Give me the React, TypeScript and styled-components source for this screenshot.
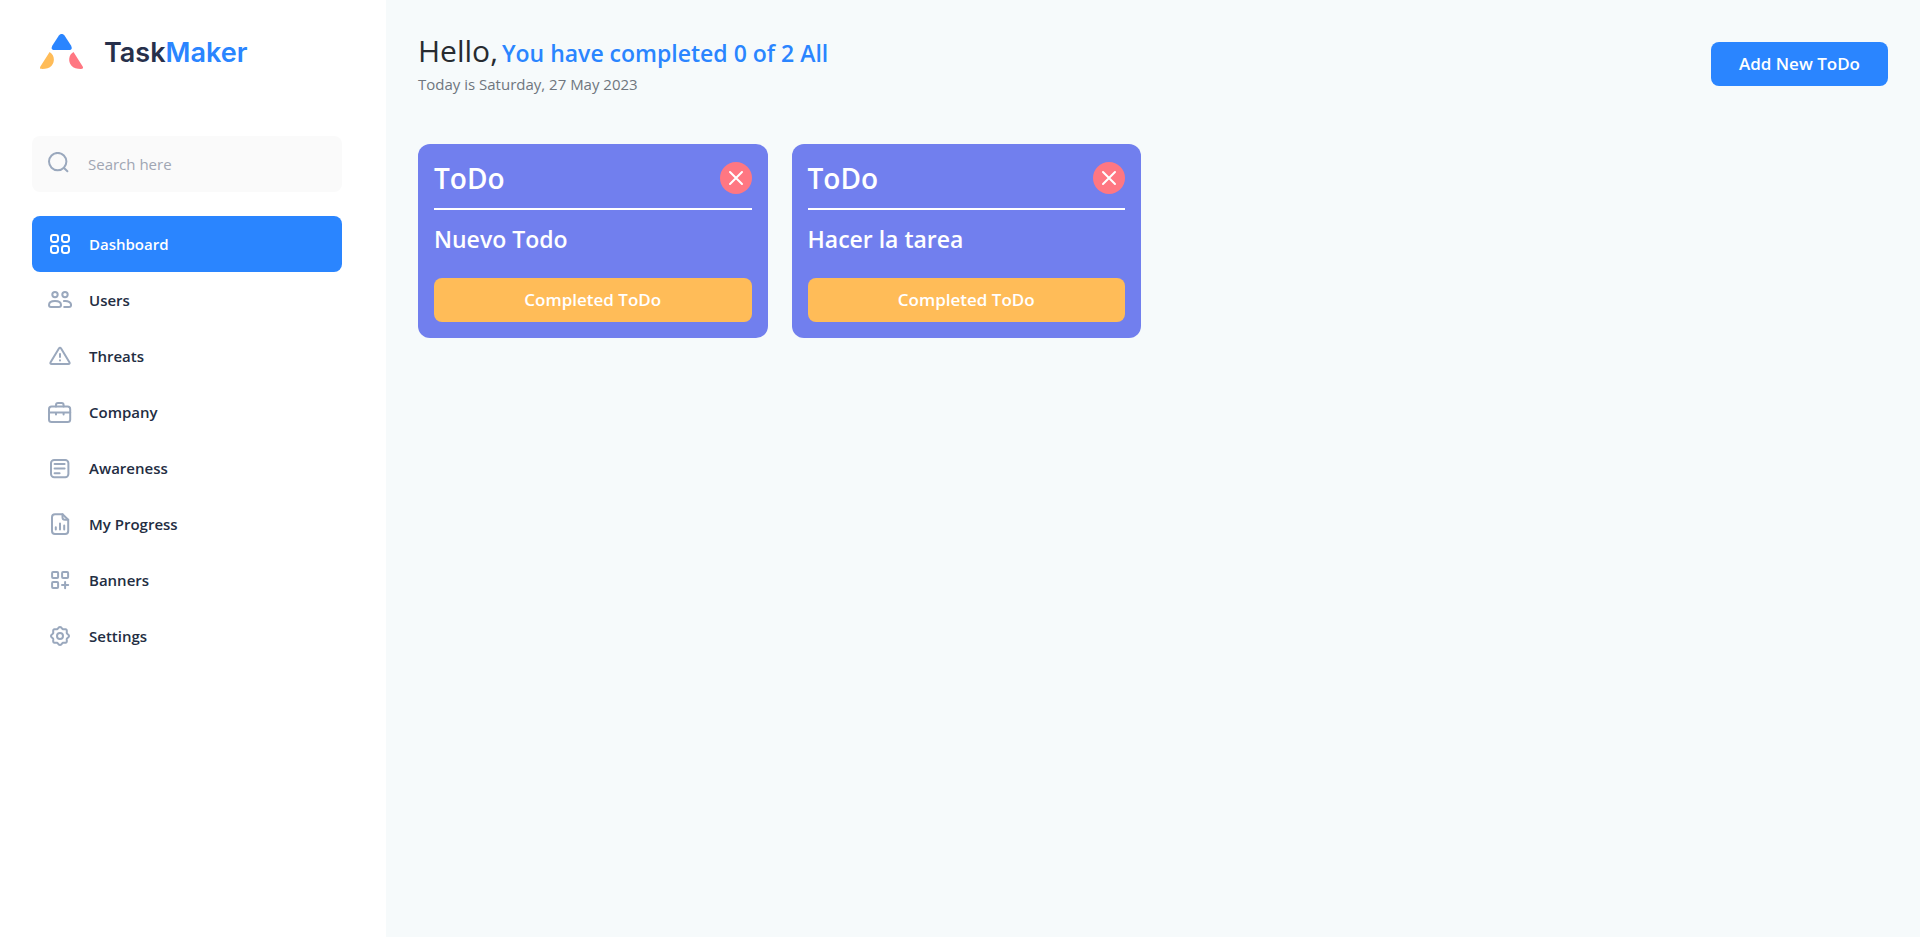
import React from "react";
import styled, { createGlobalStyle } from "styled-components";

const GlobalStyle = createGlobalStyle`
  *, *::before, *::after { box-sizing: border-box; }
  body {
    margin: 0;
    background: #f6fafb;
    color: #27303f;
    font-family: "Open Sans", "Noto Sans", sans-serif;
    font-size: 15px;
    line-height: 24px;
  }
  h1, h2, p, ul { margin: 0; padding: 0; }
  button, input { font: inherit; }
`;

const Page = styled.div`
  display: flex;
  min-height: 100vh;
`;

const Sidebar = styled.aside`
  flex: 0 0 386px;
  padding: 32px 44px 32px 32px;
  background: #ffffff;
`;

const Brand = styled.a`
  display: flex;
  align-items: center;
  gap: 20px;
  height: 40px;
  margin-bottom: 64px;
  padding-left: 8px;
  color: #27304b;
  font-family: Inter, sans-serif;
  font-size: 27px;
  font-weight: 600;
  line-height: 40px;
  text-decoration: none;
`;

const BrandName = styled.span`
  padding-top: 2px;
`;

const BrandAccent = styled.span`
  color: #2a85ff;
`;

const SearchField = styled.label`
  display: flex;
  align-items: center;
  gap: 16px;
  height: 56px;
  margin-bottom: 24px;
  padding: 0 16px;
  border-radius: 8px;
  background: #fafafa;
  color: #9aa8bd;
`;

const SearchInput = styled.input`
  flex: 1;
  min-width: 0;
  padding: 0;
  border: 0;
  outline: 0;
  background: transparent;
  color: #27303f;
  &::placeholder { color: #a0a6b3; opacity: 1; }
`;

const NavList = styled.ul`
  list-style: none;
`;

const NavLink = styled.a<{ $active?: boolean }>`
  display: flex;
  align-items: center;
  gap: 17px;
  height: 56px;
  padding: 0 16px;
  border-radius: 8px;
  background: ${(p) => (p.$active ? "#2a85ff" : "transparent")};
  color: ${(p) => (p.$active ? "#ffffff" : "#232d42")};
  font-weight: 600;
  text-decoration: none;
  svg { color: ${(p) => (p.$active ? "#ffffff" : "#9aa8bd")}; }
`;

const Main = styled.main`
  flex: 1;
  min-width: 0;
  padding: 32px;
`;

const Header = styled.header`
  display: flex;
  align-items: center;
  justify-content: space-between;
  height: 64px;
  margin-bottom: 48px;
`;

const Greeting = styled.h1`
  color: #272b30;
  font-size: 30px;
  font-weight: 400;
  line-height: 38px;
`;

const Summary = styled.span`
  margin-left: 4px;
  color: #2a85ff;
  font-size: 23px;
  font-weight: 600;
`;

const Today = styled.p`
  color: #6f767e;
`;

const Button = styled.button<{ $tone: "primary" | "warning" }>`
  height: 44px;
  padding: 0 28px;
  border: 0;
  border-radius: 8px;
  background: ${(p) => (p.$tone === "primary" ? "#2a85ff" : "#ffbc58")};
  color: #ffffff;
  font-size: 17px;
  font-weight: 600;
  cursor: pointer;
`;

const Board = styled.section`
  display: grid;
  grid-template-columns: repeat(4, minmax(0, 1fr));
  gap: 24px;
`;

const Card = styled.article`
  display: flex;
  flex-direction: column;
  padding: 16px;
  border-radius: 12px;
  background: #717fee;
  color: #ffffff;
`;

const CardHead = styled.div`
  display: flex;
  align-items: center;
  justify-content: space-between;
  padding-bottom: 12px;
  border-bottom: 2px solid #ffffff;
`;

const CardTitle = styled.h2`
  font-size: 28px;
  font-weight: 600;
  line-height: 36px;
`;

const CardText = styled.p`
  margin: 11px 0 21px;
  font-size: 23px;
  font-weight: 600;
  line-height: 36px;
`;

const CloseButton = styled.button`
  display: grid;
  place-items: center;
  width: 32px;
  height: 32px;
  padding: 0;
  border: 0;
  border-radius: 50%;
  background: #ff7782;
  color: #ffffff;
  cursor: pointer;
`;

const Icon = ({ children }: { children: React.ReactNode }) => (
  <svg
    width="24"
    height="24"
    viewBox="0 0 24 24"
    fill="none"
    stroke="currentColor"
    strokeWidth="2"
    strokeLinecap="round"
    strokeLinejoin="round"
    aria-hidden="true"
  >
    {children}
  </svg>
);

const gearPath =
  Array.from({ length: 96 }, (_, i) => {
    const t = (i / 96) * Math.PI * 2;
    const r = 8.2 + 0.8 * Math.cos(8 * t);
    return `${i ? "L" : "M"}${(12 + r * Math.cos(t)).toFixed(2)} ${(12 + r * Math.sin(t)).toFixed(2)}`;
  }).join("") + "Z";

const Logo = () => (
  <svg width="44" height="36" viewBox="0 0 44 36" aria-hidden="true">
    <path fill="#2a85ff" d="M18.900 1.500Q21.700-1.700 24.500 1.500L31 11.400Q33.300 16 28.800 16H14.600Q10.100 16 12.400 11.400Z" />
    <path fill="#ffbc58" d="M9.600 17.900C14.400 20.400 15.200 27.400 11.800 31.400C9.600 34 6 34.900 2.300 34.900C0 34.900-.4 34 .4 32.500Z" />
    <path fill="#ff7782" d="M33.500 17.900C28.700 20.400 27.900 27.400 31.300 31.400C33.500 34 37.100 34.900 40.800 34.900C43.100 34.900 43.500 34 42.700 32.500Z" />
  </svg>
);

const navItems = [
  {
    label: "Dashboard",
    icon: (
      <>
        <rect x="3" y="3" width="7" height="7" rx="2.4" />
        <rect x="14" y="3" width="7" height="7" rx="2.4" />
        <rect x="3" y="14" width="7" height="7" rx="2.4" />
        <rect x="14" y="14" width="7" height="7" rx="2.4" />
      </>
    ),
  },
  {
    label: "Users",
    icon: (
      <>
        <circle cx="7" cy="6.600" r="2.700" />
        <circle cx="17" cy="6.600" r="2.700" />
        <path d="M7 13c3.600 0 6 1.600 6 4 0 1.400-.8 2-2 2H3c-1.200 0-2-.6-2-2 0-2.400 2.400-4 6-4z" />
        <path d="M16 13.100c4-.5 7.100 1.300 7.100 3.900 0 1.400-.8 2-2 2H16.200" />
      </>
    ),
  },
  {
    label: "Threats",
    icon: (
      <>
        <path d="M10.900 4.500Q12 2.800 13.100 4.500L21.400 18.200Q22.300 20 20.300 20H3.700Q1.700 20 2.600 18.200Z" />
        <path d="M12 10v3M12 16.300v.2" />
      </>
    ),
  },
  {
    label: "Company",
    icon: (
      <>
        <rect x="1" y="6.600" width="21.200" height="15.500" rx="2.600" />
        <path d="M8 6.400V5Q8 3 10 3h3.600q2 0 2 2v1.400M1 12.500h21.200M8 12.500v2M15.600 12.500v2" />
      </>
    ),
  },
  {
    label: "Awareness",
    icon: (
      <>
        <rect x="3" y="3.900" width="17.400" height="17.400" rx="3.200" />
        <path d="M6.600 7.900h10M6.600 12.600h10M6.600 17.300h5" />
      </>
    ),
  },
  {
    label: "My Progress",
    icon: (
      <>
        <path d="M14.500 2.300H7Q4 2.300 4 5.300v13.800q0 3 3 3h10.200q3 0 3-3V7.800z" />
        <path d="M14.500 2.300v3q0 2.500 2.500 2.500h3.200M7.800 15.200v2.200M12 11.500v5.900M16.200 13.500v3.900" />
      </>
    ),
  },
  {
    label: "Banners",
    icon: (
      <>
        <rect x="4.100" y="3.900" width="6" height="6" rx="1" />
        <rect x="14.100" y="3.900" width="6" height="6" rx="1" />
        <rect x="4.100" y="13.900" width="6" height="6" rx="1" />
        <path d="M17.100 14v6.200M14 17.100h6.200" />
      </>
    ),
  },
  {
    label: "Settings",
    icon: (
      <>
        <path d={gearPath} />
        <circle cx="12" cy="12" r="3" />
      </>
    ),
  },
];

const todos = ["Nuevo Todo", "Hacer la tarea"];

const App = () => (
  <>
    <GlobalStyle />
    <Page>
      <Sidebar>
        <Brand href="#">
          <Logo />
          <BrandName>
            Task<BrandAccent>Maker</BrandAccent>
          </BrandName>
        </Brand>
        <SearchField>
          <Icon>
            <circle cx="9.700" cy="9.600" r="8.700" />
            <path d="M16 16l3.400 3.200" />
          </Icon>
          <SearchInput type="text" placeholder="Search here" aria-label="Search here" />
        </SearchField>
        <nav>
          <NavList>
            {navItems.map((item, index) => (
              <li key={item.label}>
                <NavLink href="#" $active={index === 0}>
                  <Icon>{item.icon}</Icon>
                  {item.label}
                </NavLink>
              </li>
            ))}
          </NavList>
        </nav>
      </Sidebar>
      <Main>
        <Header>
          <div>
            <Greeting>
              Hello,<Summary>You have completed 0 of 2 All</Summary>
            </Greeting>
            <Today>Today is Saturday, 27 May 2023</Today>
          </div>
          <Button type="button" $tone="primary">
            Add New ToDo
          </Button>
        </Header>
        <Board>
          {todos.map((todo) => (
            <Card key={todo}>
              <CardHead>
                <CardTitle>ToDo</CardTitle>
                <CloseButton type="button" aria-label="Delete ToDo">
                  <Icon>
                    <path d="M6 6l12 12M18 6L6 18" />
                  </Icon>
                </CloseButton>
              </CardHead>
              <CardText>{todo}</CardText>
              <Button type="button" $tone="warning">
                Completed ToDo
              </Button>
            </Card>
          ))}
        </Board>
      </Main>
    </Page>
  </>
);

export default App;
